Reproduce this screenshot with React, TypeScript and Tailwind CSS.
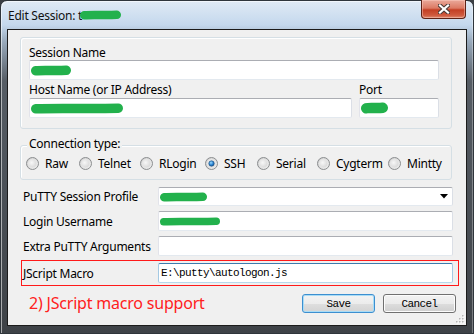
import React from "react";

function Scribble({ w, h, className = "" }: { w: number; h: number; className?: string }) {
  const sw = Math.max(h - 1.5, 3);
  const r = sw / 2;
  const m = h / 2;
  return (
    <svg width={w} height={h} className={className} style={{ display: "block", flexShrink: 0 }}>
      <path
        d={`M${r} ${m + 0.3} C ${w * 0.3} ${m - 0.5}, ${w * 0.6} ${m + 0.5}, ${w - r} ${m - 0.2}`}
        stroke="#22b14c"
        strokeWidth={sw}
        strokeLinecap="round"
        fill="none"
      />
    </svg>
  );
}

function Radio({ checked = false }: { checked?: boolean }) {
  return (
    <svg width="13" height="13" viewBox="0 0 13 13" className="block shrink-0">
      <defs>
        <linearGradient id="rBase" x1="0" y1="0" x2="1" y2="1">
          <stop offset="0" stopColor="#c9c9c9" />
          <stop offset="1" stopColor="#f2f2f2" />
        </linearGradient>
        <radialGradient id="rIn" cx="0.4" cy="0.4" r="0.7">
          <stop offset="0" stopColor="#f7f7f7" />
          <stop offset="1" stopColor="#d4d4d4" />
        </radialGradient>
        <radialGradient id="rDot" cx="0.4" cy="0.35" r="0.75">
          <stop offset="0" stopColor="#9adcff" />
          <stop offset="0.55" stopColor="#2a82d2" />
          <stop offset="1" stopColor="#104d86" />
        </radialGradient>
      </defs>
      <circle cx="6.5" cy="6.5" r="6" fill="url(#rBase)" stroke="#8c8e90" strokeWidth="1" />
      <circle cx="6.5" cy="6.5" r="4.3" fill="url(#rIn)" stroke="#e9e9e9" strokeWidth="0.8" />
      {checked && <circle cx="6.5" cy="6.5" r="2.7" fill="url(#rDot)" stroke="#1b4f7e" strokeWidth="0.6" />}
    </svg>
  );
}

function Input({ className = "", children }: { className?: string; children?: React.ReactNode }) {
  return (
    <div
      className={`box-border bg-white border border-t-[#abadb3] border-l-[#e2e3ea] border-r-[#dbdfe6] border-b-[#e3e9ef] rounded-[2px] flex items-center ${className}`}
    >
      {children}
    </div>
  );
}

const radios: { label: string; w: string; checked?: boolean }[] = [
  { label: "Raw", w: "w-[53px]" },
  { label: "Telnet", w: "w-[61px]" },
  { label: "RLogin", w: "w-[65px]" },
  { label: "SSH", w: "w-[52px]", checked: true },
  { label: "Serial", w: "w-[60px]" },
  { label: "Cygterm", w: "w-[71px]" },
  { label: "Mintty", w: "w-[60px]" },
];

export default function App() {
  return (
    <div className="w-[474px] h-[334px] overflow-hidden bg-[#3b3f44] font-['Noto_Sans',sans-serif] text-[12px] tracking-[-0.25px] text-black">
      <div className="box-border w-[474px] h-[334px] flex flex-col rounded-t-[7px] border border-[#2f353b] bg-[linear-gradient(to_bottom,#e0eaf5_0px,#c4d8ed_24px,#9aabbd_40px,#565d65_80px,#3e4247_100%)] shadow-[inset_1px_1px_0_rgba(255,255,255,0.55),inset_-1px_0_0_rgba(255,255,255,0.3)]">
        {/* Title bar */}
        <div className="h-[28px] flex shrink-0">
          <div className="flex items-center pl-[7px] h-[28px]">
            <span className="leading-[15px] text-[12px] text-[#111] whitespace-pre">Edit Session: t</span>
            <Scribble w={41} h={10} className="-ml-[2px]" />
          </div>
          <div className="ml-auto mr-[7px] w-[45px] h-[19px] -mt-[1px] box-border rounded-b-[4px] border border-t-0 border-[#5e2216] bg-[linear-gradient(to_bottom,#eaa99a_0%,#dc7a64_45%,#c33f24_55%,#cf5a3e_85%,#de8a70_100%)] shadow-[inset_0_0_0_1px_rgba(255,210,200,0.45)] flex items-center justify-center">
            <svg width="12" height="10" viewBox="0 0 12 10" className="block">
              <path d="M2 1.5 L10 8.5 M10 1.5 L2 8.5" stroke="#4a3a36" strokeWidth="4.2" strokeLinecap="square" />
              <path d="M2 1.5 L10 8.5 M10 1.5 L2 8.5" stroke="#ffffff" strokeWidth="2.2" strokeLinecap="square" />
            </svg>
          </div>
        </div>

        {/* Client area */}
        <div className="relative mx-[6px] mb-[7px] flex-1 box-border border border-[#1b1b1b] bg-[#f0f0f0] flex flex-col">
          {/* Group 1 */}
          <div className="mt-[7px] ml-[12px] w-[432px] h-[92px] box-border border border-[#d5dfe5] rounded-[3px] shadow-[inset_1px_1px_0_#ffffff] pt-[7px] pl-[8px]">
            <div className="h-[15px] leading-[15px]">Session Name</div>
            <Input className="w-[410px] h-[20px]">
              <Scribble w={40} h={11} className="ml-[1px]" />
            </Input>
            <div className="mt-[2px] flex gap-[7px]">
              <div className="w-[323px]">
                <div className="h-[15px] leading-[15px]">Host Name (or IP Address)</div>
                <Input className="mt-[1px] w-[323px] h-[20px]">
                  <Scribble w={92} h={11} className="ml-[1px]" />
                </Input>
              </div>
              <div className="w-[80px]">
                <div className="h-[15px] leading-[15px]">Port</div>
                <Input className="mt-[1px] w-[80px] h-[20px]">
                  <Scribble w={27} h={12} className="ml-[1px]" />
                </Input>
              </div>
            </div>
          </div>

          {/* Group 2 */}
          <div className="relative mt-[16px] ml-[12px] w-[432px] h-[35px] box-border border border-[#d5dfe5] rounded-[3px] shadow-[inset_1px_1px_0_#ffffff] pt-[11px] pl-[5px] flex">
            <span className="absolute left-[6px] top-[-10px] px-[2px] bg-[#f0f0f0] leading-[15px]">Connection type:</span>
            {radios.map((r) => (
              <div key={r.label} className={`flex items-center h-[13px] ${r.w}`}>
                <Radio checked={r.checked} />
                <span className="ml-[6px] leading-[15px] whitespace-nowrap">{r.label}</span>
              </div>
            ))}
          </div>

          {/* Rows */}
          <div className="mt-[7px] ml-[13px] w-[438px] flex flex-col">
            <div className="flex items-center pl-[2px] h-[19px]">
              <span className="w-[135px] leading-[15px] whitespace-nowrap">PuTTY Session Profile</span>
              <Input className="w-[295px] h-[19px] justify-between">
                <Scribble w={47} h={10} className="ml-[1px]" />
                <svg width="8" height="5" viewBox="0 0 8 5" className="block mr-[4px]">
                  <path d="M0 0 H8 L4 4.5 Z" fill="#000" />
                </svg>
              </Input>
            </div>
            <div className="mt-[5px] flex items-center pl-[2px] h-[20px]">
              <span className="w-[135px] leading-[15px] whitespace-nowrap">Login Username</span>
              <Input className="w-[295px] h-[20px]">
                <Scribble w={60} h={9} className="ml-[1px]" />
              </Input>
            </div>
            <div className="mt-[5px] flex items-center pl-[2px] h-[20px]">
              <span className="w-[135px] leading-[15px] whitespace-nowrap">Extra PuTTY Arguments</span>
              <Input className="w-[295px] h-[20px]" />
            </div>
            <div className="mt-[4px] box-border border border-[#ff1a1a] pt-[2px] pb-[2px] pl-[1px] flex items-center">
              <span className="w-[135px] leading-[15px] whitespace-nowrap">JScript Macro</span>
              <div className="box-border w-[295px] h-[20px] bg-white border border-t-[#3d7bad] border-l-[#a4c9e3] border-r-[#a4c9e3] border-b-[#b7d9ed] rounded-[2px] flex items-center pl-[2px]">
                <span className="font-['Liberation_Mono',monospace] text-[11px] tracking-[-0.6px] leading-[14px] whitespace-pre">E:\putty\autologon.js</span>
              </div>
            </div>
          </div>

          {/* Footer */}
          <div className="mt-[8px] flex items-center h-[19px] pl-[21px] pr-[10px]">
            <span className="text-[16px] tracking-[-0.2px] leading-[19px] text-[#ff2020] whitespace-nowrap">2) JScript macro support</span>
            <div className="ml-auto flex gap-[8px]">
              <button className="box-border w-[73px] h-[19px] rounded-[3px] border border-[#3c8fd0] shadow-[inset_0_0_0_1px_#a9dcf6] bg-[linear-gradient(to_bottom,#f3f3f3_0%,#ececec_50%,#dfdfdf_50%,#d3d3d3_100%)] flex items-center justify-center font-['Liberation_Mono',monospace] text-[11px] tracking-[-0.6px] leading-[14px]">
                Save
              </button>
              <button className="box-border w-[73px] h-[19px] rounded-[3px] border border-[#707070] shadow-[inset_0_0_0_1px_#fcfcfc] bg-[linear-gradient(to_bottom,#f2f2f2_0%,#ebebeb_50%,#dddddd_50%,#cfcfcf_100%)] flex items-center justify-center font-['Liberation_Mono',monospace] text-[11px] tracking-[-0.6px] leading-[14px]">
                Cancel
              </button>
            </div>
          </div>

          {/* Resize grip */}
          <svg width="10" height="10" viewBox="0 0 10 10" className="absolute right-[1px] bottom-[1px] block">
            {[
              [7, 1],
              [4, 4],
              [7, 4],
              [1, 7],
              [4, 7],
              [7, 7],
            ].map(([x, y], i) => (
              <g key={i}>
                <rect x={x + 1} y={y + 1} width="1.5" height="1.5" fill="#ffffff" />
                <rect x={x} y={y} width="1.5" height="1.5" fill="#b5b5b5" />
              </g>
            ))}
          </svg>
        </div>
      </div>
    </div>
  );
}
